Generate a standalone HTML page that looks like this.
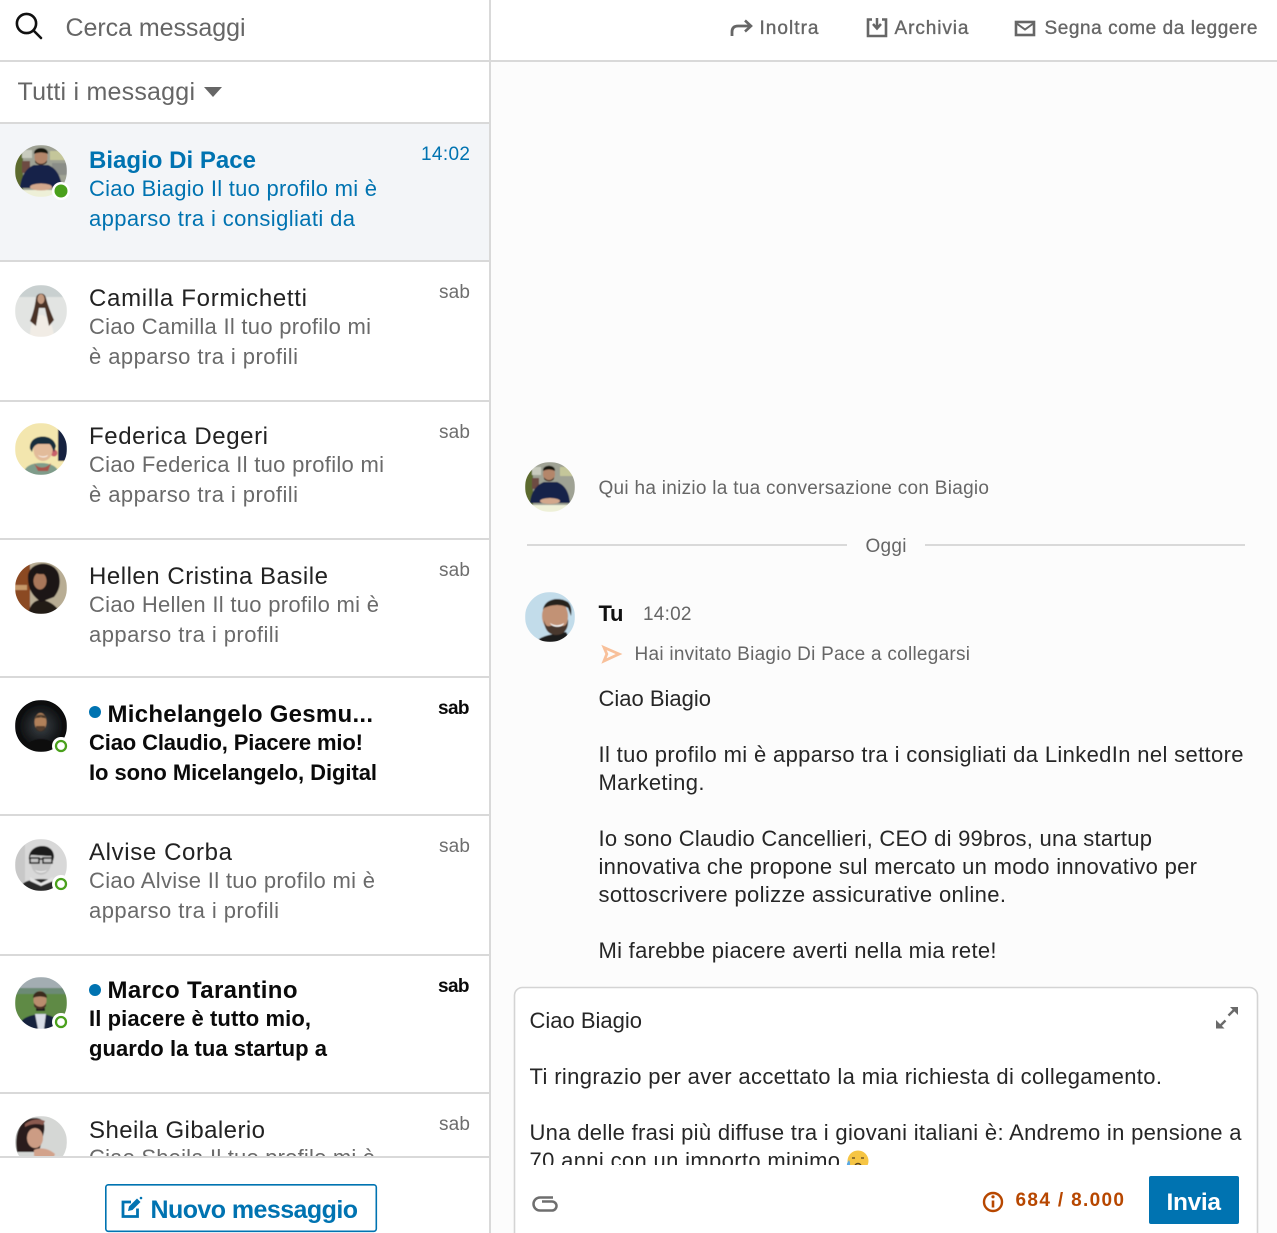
<!DOCTYPE html>
<html lang="it"><head><meta charset="utf-8"><title>Messaggi</title>
<style>
html,body{margin:0;padding:0;background:#fff;width:1277px;height:1233px;overflow:hidden}
svg{display:block}
text{font-family:"Liberation Sans",Arial,sans-serif;white-space:pre}
.n{font-size:24px;fill:#222}
.p{font-size:22px;fill:#6a6a6a}
.t{font-size:19px;fill:#6e6e6e}
.b{font-weight:700;fill:#0a0a0a}
.bl{fill:#0073b1}
.h{font-size:19px;fill:#666;stroke:#666;stroke-width:.35}
.c{font-size:19px;fill:#666}
.m{font-size:22px;fill:#262626}
</style></head><body>
<svg xmlns="http://www.w3.org/2000/svg" width="1277" height="1233" viewBox="0 0 1277 1233">
<defs>
<clipPath id="list"><rect x="0" y="124" width="489" height="1032"/></clipPath>
<clipPath id="comp"><rect x="516" y="990" width="740" height="175"/></clipPath>
<clipPath id="a1"><circle cx="41" cy="171" r="26"/></clipPath>
<clipPath id="a2"><circle cx="41" cy="311" r="26"/></clipPath>
<clipPath id="a3"><circle cx="41" cy="449" r="26"/></clipPath>
<clipPath id="a4"><circle cx="41" cy="588" r="26"/></clipPath>
<clipPath id="a5"><circle cx="41" cy="726" r="26"/></clipPath>
<clipPath id="a6"><circle cx="41" cy="865" r="26"/></clipPath>
<clipPath id="a7"><circle cx="41" cy="1003" r="26"/></clipPath>
<clipPath id="a8"><circle cx="41" cy="1142" r="26"/></clipPath>
<clipPath id="a9"><circle cx="550" cy="487" r="25"/></clipPath>
<clipPath id="a10"><circle cx="550" cy="617" r="25"/></clipPath>
<filter id="s" x="-10%" y="-10%" width="120%" height="120%"><feGaussianBlur stdDeviation=".6"/></filter>
<radialGradient id="dk"><stop offset="0" stop-color="#3b4146"/><stop offset=".75" stop-color="#121416"/><stop offset="1" stop-color="#050505"/></radialGradient>
</defs>

<!-- backgrounds -->
<rect width="1277" height="1233" fill="#fff"/>
<rect x="491" y="62" width="786" height="1171" fill="#fcfcfc"/>
<rect x="0" y="124" width="489" height="136" fill="#f3f5f8"/>

<!-- left header -->
<g fill="none" stroke="#111" stroke-width="2.6"><circle cx="26.500" cy="23.500" r="9.600"/><path d="M33.500 30.500 41 38" stroke-linecap="round"/></g>
<text x="65.500" y="36" font-size="25" fill="#666" textLength="180" lengthAdjust="spacing">Cerca messaggi</text>
<text x="17.500" y="100" font-size="25" fill="#666" textLength="177.500" lengthAdjust="spacing">Tutti i messaggi</text>
<path d="M204 87h18l-9 10z" fill="#666"/>

<!-- list -->
<g clip-path="url(#list)">
<text x="89" y="168" class="n b bl" textLength="167" lengthAdjust="spacing">Biagio Di Pace</text>
<text x="89" y="196" class="p bl" textLength="288" lengthAdjust="spacing">Ciao Biagio Il tuo profilo mi è</text>
<text x="89" y="226" class="p bl" textLength="266" lengthAdjust="spacing">apparso tra i consigliati da</text>
<text x="421" y="160" class="t bl" textLength="49" lengthAdjust="spacing">14:02</text>

<text x="89" y="306" class="n" textLength="218" lengthAdjust="spacing">Camilla Formichetti</text>
<text x="89" y="334" class="p" textLength="282" lengthAdjust="spacing">Ciao Camilla Il tuo profilo mi</text>
<text x="89" y="364" class="p" textLength="209" lengthAdjust="spacing">è apparso tra i profili</text>
<text x="439" y="298" class="t" textLength="31" lengthAdjust="spacing">sab</text>

<text x="89" y="444" class="n" textLength="179" lengthAdjust="spacing">Federica Degeri</text>
<text x="89" y="472" class="p" textLength="295" lengthAdjust="spacing">Ciao Federica Il tuo profilo mi</text>
<text x="89" y="502" class="p" textLength="209" lengthAdjust="spacing">è apparso tra i profili</text>
<text x="439" y="438" class="t" textLength="31" lengthAdjust="spacing">sab</text>

<text x="89" y="584" class="n" textLength="239" lengthAdjust="spacing">Hellen Cristina Basile</text>
<text x="89" y="612" class="p" textLength="290" lengthAdjust="spacing">Ciao Hellen Il tuo profilo mi è</text>
<text x="89" y="642" class="p" textLength="190" lengthAdjust="spacing">apparso tra i profili</text>
<text x="439" y="576" class="t" textLength="31" lengthAdjust="spacing">sab</text>

<circle cx="95" cy="712" r="6" fill="#0073b1"/>
<text x="107.500" y="722" class="n b" textLength="265.500" lengthAdjust="spacing">Michelangelo Gesmu...</text>
<text x="89" y="750" class="p b" textLength="274" lengthAdjust="spacing">Ciao Claudio, Piacere mio!</text>
<text x="89" y="780" class="p b" textLength="288" lengthAdjust="spacing">Io sono Micelangelo, Digital</text>
<text x="438" y="714" class="t b" textLength="31.500" lengthAdjust="spacing">sab</text>

<text x="89" y="860" class="n" textLength="143" lengthAdjust="spacing">Alvise Corba</text>
<text x="89" y="888" class="p" textLength="286" lengthAdjust="spacing">Ciao Alvise Il tuo profilo mi è</text>
<text x="89" y="918" class="p" textLength="190" lengthAdjust="spacing">apparso tra i profili</text>
<text x="439" y="852" class="t" textLength="31" lengthAdjust="spacing">sab</text>

<circle cx="95" cy="990" r="6" fill="#0073b1"/>
<text x="107.500" y="998" class="n b" textLength="190" lengthAdjust="spacing">Marco Tarantino</text>
<text x="89" y="1026" class="p b" textLength="222" lengthAdjust="spacing">Il piacere è tutto mio,</text>
<text x="89" y="1056" class="p b" textLength="238" lengthAdjust="spacing">guardo la tua startup a</text>
<text x="438" y="992" class="t b" textLength="31.500" lengthAdjust="spacing">sab</text>

<text x="89" y="1138" class="n" textLength="176" lengthAdjust="spacing">Sheila Gibalerio</text>
<text x="89" y="1165" class="p" textLength="286" lengthAdjust="spacing">Ciao Sheila Il tuo profilo mi è</text>
<text x="439" y="1130" class="t" textLength="31" lengthAdjust="spacing">sab</text>

<!-- avatars -->
<g clip-path="url(#a1)"><g filter="url(#s)">
<rect x="15" y="145" width="52" height="52" fill="#9fa294"/>
<rect x="15" y="145" width="8" height="52" fill="#5c6b2e"/>
<rect x="22" y="150" width="10" height="8" fill="#c8cbbd"/><rect x="22" y="161" width="8" height="12" fill="#6d4b42"/>
<rect x="50" y="151" width="17" height="9" fill="#c4c69a"/><rect x="52" y="163" width="15" height="12" fill="#8a8d88"/>
<rect x="15" y="190" width="52" height="7" fill="#eef0d8"/>
<path d="M20 188c1-12 6-20 14-23h14c8 3 13 11 14 23z" fill="#16224a"/>
<ellipse cx="41" cy="157" rx="6.500" ry="8" fill="#b4866a"/><path d="M34 154c-1-8 15-8 14 0-4-2-10-2-14 0z" fill="#17130f"/>
<path d="M35 160c2 5 10 5 12 0v2c-2 4-10 4-12 0z" fill="#3b2a20"/>
<ellipse cx="41" cy="187" rx="11" ry="3.500" fill="#d2a78c"/></g></g>

<g clip-path="url(#a2)"><g filter="url(#s)">
<rect x="15" y="285" width="52" height="52" fill="#e2e4e2"/>
<rect x="15" y="285" width="52" height="12" fill="#c9d0d0"/>
<path d="M30 337c0-14 5-22 11-22s12 8 13 22z" fill="#f1ece5"/>
<path d="M36 298c1-6 9-6 10 0 2 8 5 15 8 22l-5 6-4-18h-6l-3 18-6-5c3-7 5-15 6-23z" fill="#4a3225"/>
<ellipse cx="41" cy="299" rx="3.500" ry="5" fill="#c39a80"/></g></g>

<g clip-path="url(#a3)"><g filter="url(#s)">
<rect x="15" y="423" width="52" height="52" fill="#f3e6ae"/>
<path d="M58 423h9v38h-9z" fill="#17233f"/><circle cx="54" cy="453" r="3.500" fill="#c9606a"/>
<path d="M23 475c1-9 9-12 18-12s17 3 19 12z" fill="#7f9c8a"/>
<path d="M34 463c4 6 12 6 17 0l-3 8h-10z" fill="#a8524c"/>
<ellipse cx="43" cy="450" rx="9.500" ry="11" fill="#e2bb9a"/>
<path d="M30 449c-2-15 23-17 26-3l-2 6c-2-4-3-8-5-8h-11c-3 1-5 3-6 8z" fill="#142f3d"/>
<path d="M38 455c3 2 7 2 10 0-1 3-8 3-10 0z" fill="#fff"/></g></g>

<g clip-path="url(#a4)"><g filter="url(#s)">
<rect x="15" y="562" width="52" height="52" fill="#b8ad94"/>
<rect x="15" y="562" width="15" height="52" fill="#8b4a24"/><rect x="15" y="585" width="12" height="5" fill="#c79a6a"/>
<path d="M28 614c2-10 7-14 13-14s14 4 21 14z" fill="#231a18"/>
<path d="M28 575c3-15 27-15 31 0 2 9 0 16-5 22l-13 5c-7-5-14-12-13-27z" fill="#1e1512"/>
<ellipse cx="40" cy="581" rx="6.500" ry="8.500" fill="#a9775a"/>
<path d="M34 572c4-4 10-3 13 2-5 0-9 1-13-2z" fill="#1e1512"/></g></g>

<g clip-path="url(#a5)"><g filter="url(#s)">
<rect x="15" y="700" width="52" height="52" fill="url(#dk)"/>
<path d="M24 752c1-9 9-13 17-13s16 4 17 13z" fill="#0b0b0b"/>
<ellipse cx="40.500" cy="722" rx="6" ry="9" fill="#b0805a"/>
<path d="M34.500 719c0-6 12-6 12 0-3-2-9-2-12 0z" fill="#5a4636"/>
<path d="M36 726h9v4c-2 2-7 2-9 0z" fill="#3c2c22" opacity=".8"/>
<path d="M37 717h3M42 717h3" stroke="#2a1e16" stroke-width="1"/></g></g>

<g clip-path="url(#a6)"><g filter="url(#s)">
<rect x="15" y="839" width="52" height="52" fill="#d8d8d8"/>
<rect x="15" y="839" width="10" height="52" fill="#c8c8c8"/>
<path d="M18 891c2-8 10-12 23-12s21 4 23 12z" fill="#2b2b2b"/>
<path d="M30 877l11 6 12-6v4l-12 5-11-5z" fill="#e3e3e3"/>
<ellipse cx="41" cy="861" rx="10.500" ry="14" fill="#c4c4c4"/>
<path d="M29 860c-2-17 25-19 25-3l-1 4-2-5c-6 0-14-1-20-1z" fill="#1d1d1d"/>
<path d="M30 858h9v5h-9zM43 858h9v5h-9zM39 859h4" fill="none" stroke="#222" stroke-width="1.500"/>
<path d="M35 870c3 2 9 2 12 0-2 3-10 3-12 0z" fill="#fff"/></g></g>

<g clip-path="url(#a7)"><g filter="url(#s)">
<rect x="15" y="977" width="52" height="14" fill="#a3adb2"/>
<rect x="15" y="988" width="52" height="7" fill="#6c8a75"/>
<rect x="15" y="994" width="52" height="35" fill="#5e8a44"/>
<path d="M18 1029c1-9 8-14 23-15 14 1 17 6 19 15z" fill="#16213e"/>
<path d="M35 1014h11l-2 15h-6z" fill="#d8dde6"/><path d="M36 1008h9v3h-9z" fill="#1a1a1a"/>
<ellipse cx="40" cy="1000" rx="6.500" ry="9" fill="#b98d6e"/>
<path d="M33 998c0-9 14-9 14 0-4-2-10-2-14 0z" fill="#3b2a1f"/>
<path d="M34 1003c3 5 10 5 12 0v3c-2 4-10 4-12 0z" fill="#4b3325"/></g></g>

<g clip-path="url(#a8)"><g filter="url(#s)">
<rect x="15" y="1116" width="52" height="52" fill="#d5d7d5"/>
<path d="M17 1152c-3-17 2-34 18-34 10 0 10 8 9 14l-5 20z" fill="#2a1e1a"/>
<ellipse cx="35" cy="1138" rx="8" ry="10" fill="#cc9c84"/>
<path d="M25 1124c6-5 14-6 20-3l-2 4c-6-2-13-1-18 2z" fill="#8b5a50"/>
<path d="M34 1150c6-3 14-2 21 4l-3 8-18-6z" fill="#d2a28b"/></g></g>
</g>

<!-- status -->
<circle cx="61" cy="191" r="9" fill="#fff"/><circle cx="61" cy="191" r="6.500" fill="#4aa01c"/>
<circle cx="61" cy="746" r="9" fill="#fff"/><circle cx="61" cy="746" r="5" fill="#fff" stroke="#4aa01c" stroke-width="2.300"/>
<circle cx="61" cy="884" r="9" fill="#fff"/><circle cx="61" cy="884" r="5" fill="#fff" stroke="#4aa01c" stroke-width="2.300"/>
<circle cx="61" cy="1022" r="9" fill="#fff"/><circle cx="61" cy="1022" r="5" fill="#fff" stroke="#4aa01c" stroke-width="2.300"/>

<!-- left bottom -->
<rect x="0" y="1157" width="489" height="76" fill="#fff"/>
<rect x="105.800" y="1184.800" width="270.500" height="46.500" rx="2.500" fill="#fff" stroke="#0073b1" stroke-width="1.600"/>
<path d="M131 1202h-8v14.500h14.500v-8" fill="none" stroke="#0073b1" stroke-width="2.800"/>
<path d="M128 1211l1-4.500 8-8 3.500 3.500-8 8z" fill="#0073b1"/><circle cx="141" cy="1198" r="1.300" fill="#0073b1"/>
<text x="150.500" y="1218" font-size="25" font-weight="700" fill="#0073b1" textLength="207.500" lengthAdjust="spacing">Nuovo messaggio</text>

<!-- dividers -->
<g fill="#d9d9d9">
<rect x="0" y="60" width="1277" height="2"/>
<rect x="0" y="122" width="489" height="2"/>
<rect x="0" y="260" width="489" height="2"/>
<rect x="0" y="400" width="489" height="2"/>
<rect x="0" y="538" width="489" height="2"/>
<rect x="0" y="676" width="489" height="2"/>
<rect x="0" y="814" width="489" height="2"/>
<rect x="0" y="954" width="489" height="2"/>
<rect x="0" y="1092" width="489" height="2"/>
<rect x="0" y="1156" width="489" height="2"/>
<rect x="489" y="0" width="2" height="1233"/>
<rect x="527" y="544" width="320" height="2"/>
<rect x="925" y="544" width="320" height="2"/>
</g>

<!-- top actions -->
<path d="M732 36v-4c0-4 2-6 6-6h13" fill="none" stroke="#666" stroke-width="2.800"/>
<path d="M745 20.500l6 5.500-6 5.500" fill="none" stroke="#666" stroke-width="2.600"/>
<text x="759.500" y="34" class="h" textLength="59" lengthAdjust="spacing">Inoltra</text>
<path d="M872 19.500h-4v16.500h18v-16.500h-4" fill="none" stroke="#666" stroke-width="2.600"/>
<path d="M877 18v10M873 24l4 4.500 4-4.500" fill="none" stroke="#666" stroke-width="2.500"/>
<text x="894.500" y="34" class="h" textLength="74" lengthAdjust="spacing">Archivia</text>
<rect x="1016" y="22" width="18" height="13" fill="none" stroke="#666" stroke-width="2.600"/>
<path d="M1016 23l9 6.500 9-6.500" fill="none" stroke="#666" stroke-width="2"/>
<text x="1044.500" y="34" class="h" textLength="213" lengthAdjust="spacing">Segna come da leggere</text>

<!-- chat -->
<g clip-path="url(#a9)"><g filter="url(#s)">
<rect x="525" y="462" width="50" height="50" fill="#9fa294"/>
<rect x="525" y="462" width="8" height="50" fill="#5c6b2e"/>
<rect x="532" y="467" width="9" height="8" fill="#c8cbbd"/><rect x="532" y="478" width="7" height="11" fill="#6d4b42"/>
<rect x="560" y="467" width="15" height="9" fill="#c4c69a"/>
<rect x="525" y="505" width="50" height="7" fill="#eef0d8"/>
<path d="M530 503c1-11 6-18 14-21h13c8 3 12 10 13 21z" fill="#16224a"/>
<ellipse cx="549" cy="474" rx="6" ry="7.500" fill="#b4866a"/><path d="M543 471c-1-7 13-7 12 0-4-2-8-2-12 0z" fill="#17130f"/>
<path d="M544 477c2 4 8 4 10 0v2c-2 3-8 3-10 0z" fill="#3b2a20"/>
<ellipse cx="550" cy="501" rx="10" ry="3" fill="#d2a78c"/></g></g>
<text x="598.500" y="494" class="c" textLength="390.500" lengthAdjust="spacing">Qui ha inizio la tua conversazione con Biagio</text>
<text x="865.500" y="552" class="c" textLength="41" lengthAdjust="spacing">Oggi</text>

<g clip-path="url(#a10)"><g filter="url(#s)">
<rect x="525" y="592" width="50" height="50" fill="#c2dcea"/>
<path d="M536 642c4-6 16-8 30-10l6 10z" fill="#1c1c1c"/>
<ellipse cx="555" cy="616" rx="13" ry="16" fill="#c29274"/>
<path d="M543 610c1-11 16-14 25-8 3 3 4 8 3 14l-3-8c-6-4-15-4-24 0z" fill="#27211d"/>
<path d="M544 620c1 5 3 7 6 6 4-1 9-1 13 0 3 0 4-3 5-7 1 10-4 16-12 16s-12-7-12-15z" fill="#4a382e"/>
<path d="M550 623c4 3 10 3 14 0-1 5-12 5-14 0z" fill="#fff"/></g></g>
<text x="598.500" y="621" font-size="22" font-weight="700" fill="#111" textLength="25" lengthAdjust="spacing">Tu</text>
<text x="643" y="620" class="c" textLength="48.500" lengthAdjust="spacing">14:02</text>
<path d="M604 647.500l15 6.500-15 7 2.800-7z" fill="none" stroke="#f8c09a" stroke-width="2.800" stroke-linejoin="miter"/>
<text x="634.500" y="660" class="c" textLength="335.500" lengthAdjust="spacing">Hai invitato Biagio Di Pace a collegarsi</text>

<text x="598.500" y="706" class="m" textLength="112.500" lengthAdjust="spacing">Ciao Biagio</text>
<text x="598.500" y="762" class="m" textLength="645" lengthAdjust="spacing">Il tuo profilo mi è apparso tra i consigliati da LinkedIn nel settore</text>
<text x="598.500" y="790" class="m" textLength="106" lengthAdjust="spacing">Marketing.</text>
<text x="598.500" y="846" class="m" textLength="553.500" lengthAdjust="spacing">Io sono Claudio Cancellieri, CEO di 99bros, una startup</text>
<text x="598.500" y="874" class="m" textLength="598.500" lengthAdjust="spacing">innovativa che propone sul mercato un modo innovativo per</text>
<text x="598.500" y="902" class="m" textLength="407.500" lengthAdjust="spacing">sottoscrivere polizze assicurative online.</text>
<text x="598.500" y="958" class="m" textLength="398" lengthAdjust="spacing">Mi farebbe piacere averti nella mia rete!</text>

<!-- compose -->
<rect x="514.500" y="987.500" width="743" height="270" rx="8" fill="#fff" stroke="#d4d4d4" stroke-width="1.600"/>
<g clip-path="url(#comp)">
<text x="529.500" y="1028" class="m" textLength="112.500" lengthAdjust="spacing">Ciao Biagio</text>
<text x="529.500" y="1084" class="m" textLength="632.500" lengthAdjust="spacing">Ti ringrazio per aver accettato la mia richiesta di collegamento.</text>
<text x="529.500" y="1140" class="m" textLength="712" lengthAdjust="spacing">Una delle frasi più diffuse tra i giovani italiani è: Andremo in pensione a</text>
<text x="529.500" y="1168" class="m" textLength="310.500" lengthAdjust="spacing">70 anni con un importo minimo</text>
<circle cx="858" cy="1161" r="10.500" fill="#f6c544"/>
<path d="M852 1158h3M861 1158h3M855 1165c2-2 4-2 6 0" stroke="#5b4520" stroke-width="1.300" fill="none"/>
<path d="M849 1160c-2 3-3 5-1 6s3-2 1-6z" fill="#5aa9e6"/>
</g>
<path d="M1228.500 1015.500l6-6" stroke="#6a6a6a" stroke-width="2.400"/><path d="M1230 1007h8v8z" fill="#6a6a6a"/>
<path d="M1225.500 1020.500l-6 6" stroke="#6a6a6a" stroke-width="2.400"/><path d="M1216 1020v8.500h8.500z" fill="#6a6a6a"/>
<path d="M553 1197.500h-13a6.500 6.500 0 0 0 0 13h12a4.500 4.500 0 0 0 0-9h-10" fill="none" stroke="#6e6e6e" stroke-width="2.500"/>
<circle cx="993" cy="1202" r="9" fill="none" stroke="#b74700" stroke-width="2.400"/>
<path d="M993 1200.500v7" stroke="#b74700" stroke-width="2.600"/><circle cx="993" cy="1196.800" r="1.600" fill="#b74700"/>
<text x="1015.500" y="1206" font-size="19" font-weight="700" fill="#b74700" textLength="108.500" lengthAdjust="spacing">684 / 8.000</text>
<rect x="1149" y="1176" width="90" height="48" rx="2" fill="#0073b1"/>
<text x="1166.500" y="1210" font-size="24.500" font-weight="700" fill="#fff" textLength="54.500" lengthAdjust="spacing">Invia</text>
</svg>
</body></html>
